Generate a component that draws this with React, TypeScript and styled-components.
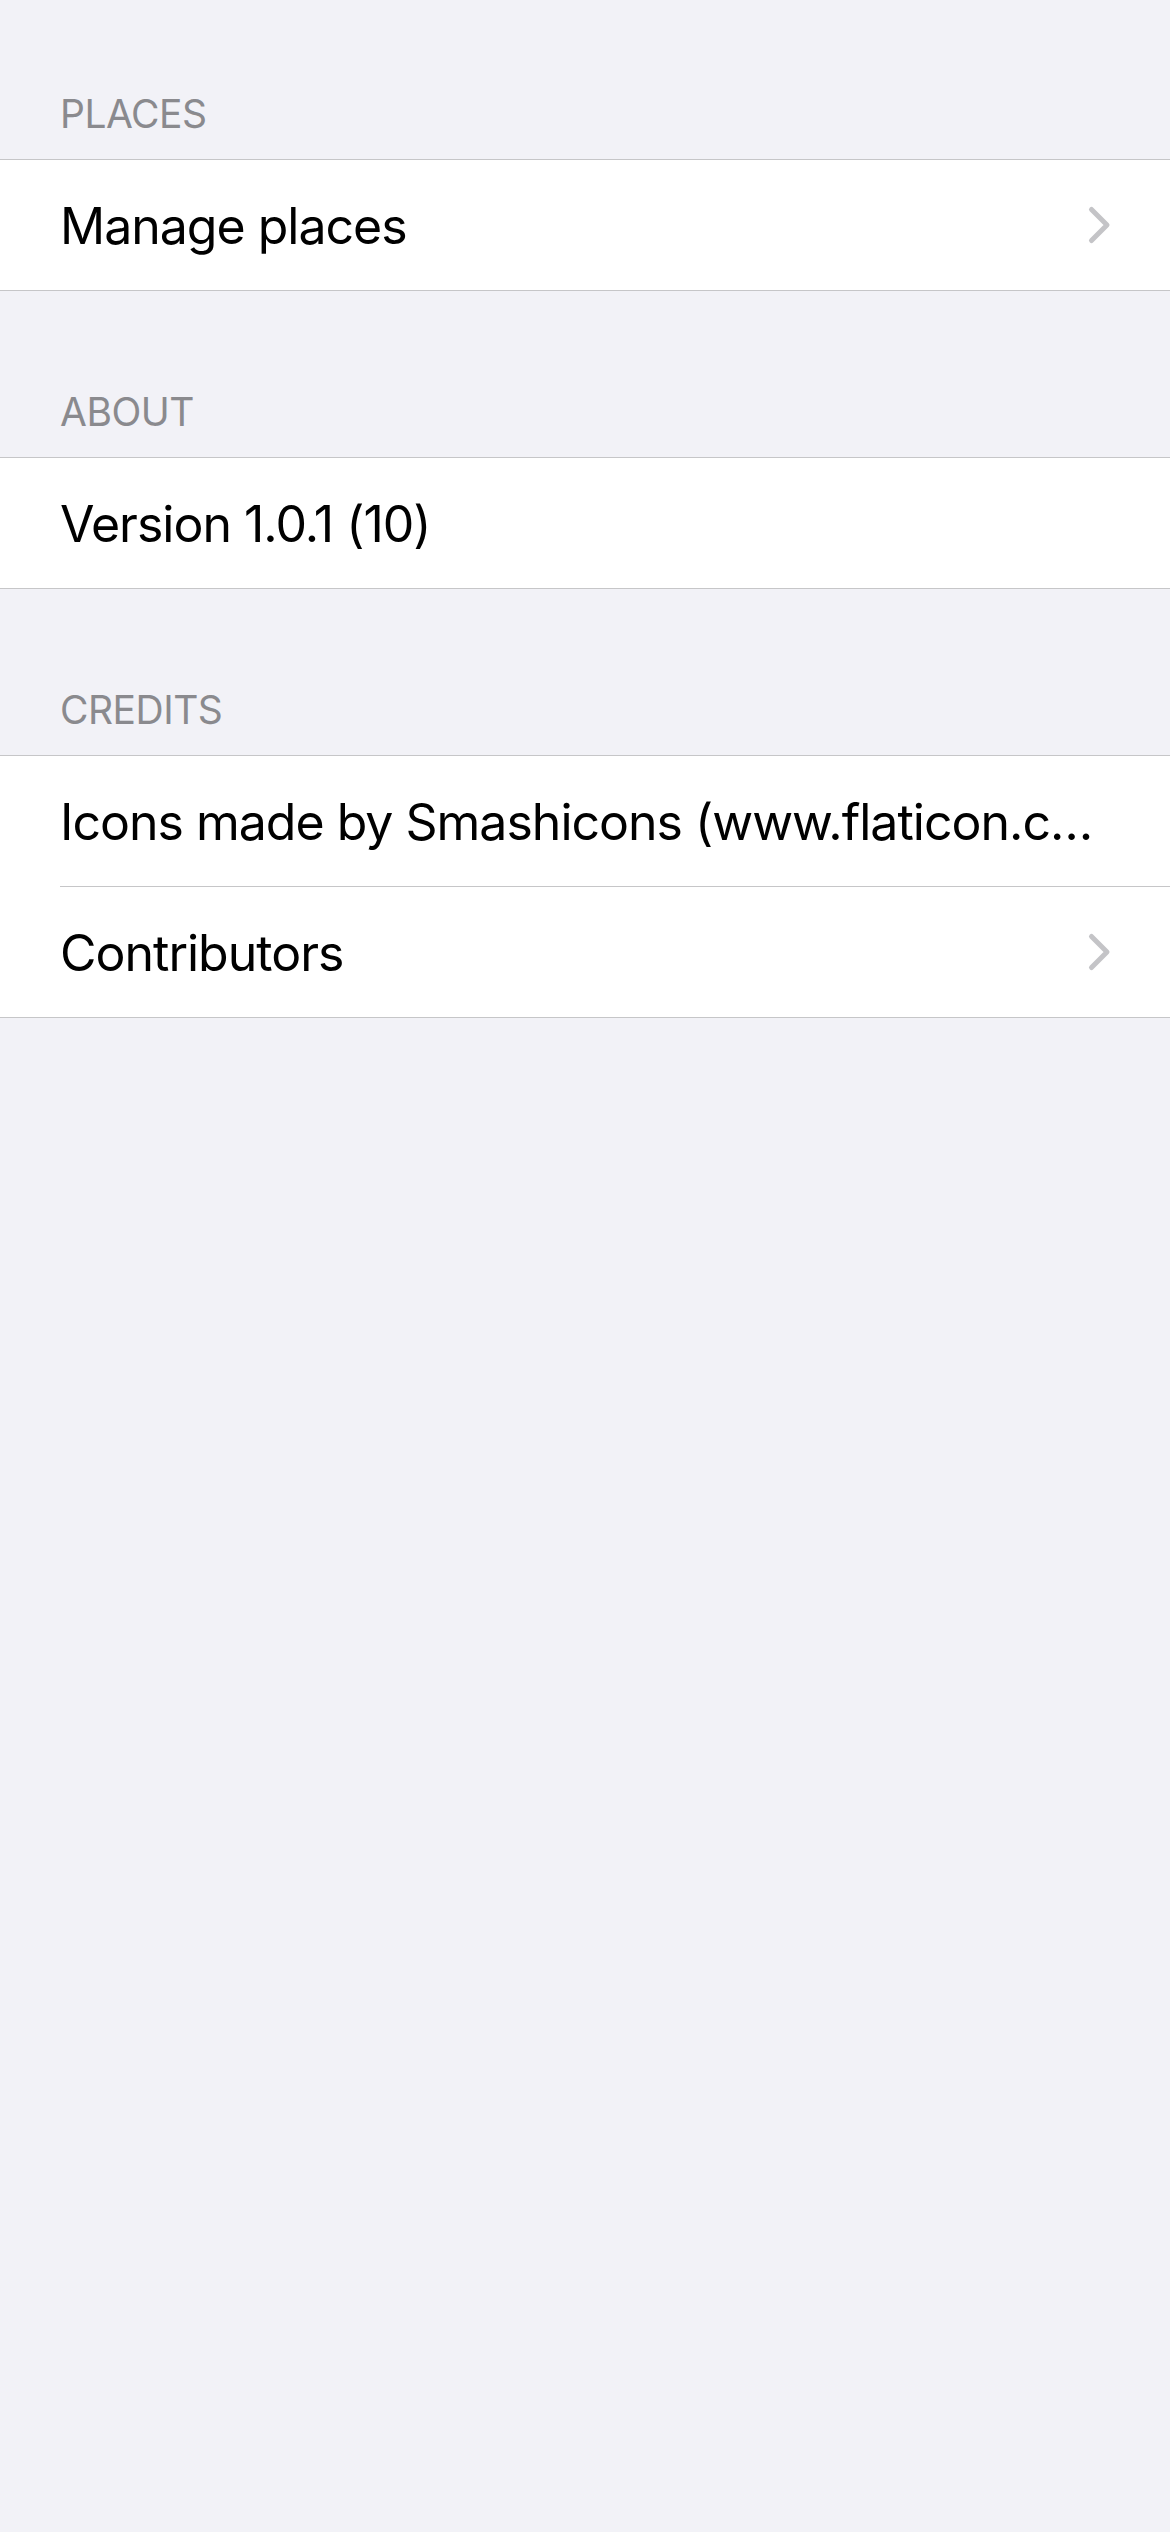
import React from "react";
import styled, { createGlobalStyle } from "styled-components";

const GlobalStyle = createGlobalStyle`
  html, body {
    margin: 0;
    padding: 0;
    background: #f2f2f7;
  }
  body {
    font-family: Inter, "Noto Sans", "Liberation Sans", sans-serif;
    -webkit-font-smoothing: antialiased;
  }
`;

const Page = styled.div`
  min-height: 2532px;
  width: 1170px;
  background: #f2f2f7;
  display: flex;
  flex-direction: column;
`;

const Section = styled.section`
  display: flex;
  flex-direction: column;
`;

const SectionHeader = styled.h2<{ $first?: boolean }>`
  margin: 0;
  padding: ${(p) => (p.$first ? "94px" : "101px")} 60px 26px;
  font-size: 39px;
  line-height: 39px;
  font-weight: 400;
  letter-spacing: -0.5px;
  text-transform: uppercase;
  color: #8a8a8e;
`;

const Group = styled.ul`
  list-style: none;
  margin: 0;
  padding: 0;
  background: #ffffff;
  border-top: 1px solid #c6c6c8;
  border-bottom: 1px solid #c6c6c8;
`;

const Row = styled.li`
  padding-left: 60px;
  display: flex;
  & + & > div {
    border-top: 1px solid #c6c6c8;
  }
`;

const RowContent = styled.div`
  flex: 1;
  height: 130px;
  display: flex;
  align-items: center;
  justify-content: space-between;
  padding-right: 58px;
  min-width: 0;
`;

const Label = styled.span`
  font-size: 50px;
  line-height: 60px;
  padding-top: 2px;
  font-weight: 400;
  color: #000000;
  letter-spacing: -1px;
  white-space: nowrap;
  overflow: hidden;
`;

const Chevron = styled.svg`
  width: 28px;
  height: 42px;
  flex-shrink: 0;
`;

const ChevronIcon = () => (
  <Chevron viewBox="0 0 28 42" aria-hidden="true">
    <path
      d="M7.5 5.5 L23 21 L7.5 36.5"
      fill="none"
      stroke="#c4c4c7"
      strokeWidth="5"
      strokeLinecap="round"
      strokeLinejoin="round"
    />
  </Chevron>
);

type Item = { label: string; chevron?: boolean };
type SectionData = { title: string; items: Item[] };

const sections: SectionData[] = [
  { title: "Places", items: [{ label: "Manage places", chevron: true }] },
  { title: "About", items: [{ label: "Version 1.0.1 (10)" }] },
  {
    title: "Credits",
    items: [
      { label: "Icons made by Smashicons (www.flaticon.c…" },
      { label: "Contributors", chevron: true },
    ],
  },
];

export default function App() {
  return (
    <>
      <GlobalStyle />
      <Page>
        {sections.map((s, i) => (
          <Section key={s.title}>
            <SectionHeader $first={i === 0}>{s.title}</SectionHeader>
            <Group>
              {s.items.map((it) => (
                <Row key={it.label}>
                  <RowContent>
                    <Label>{it.label}</Label>
                    {it.chevron && <ChevronIcon />}
                  </RowContent>
                </Row>
              ))}
            </Group>
          </Section>
        ))}
      </Page>
    </>
  );
}
